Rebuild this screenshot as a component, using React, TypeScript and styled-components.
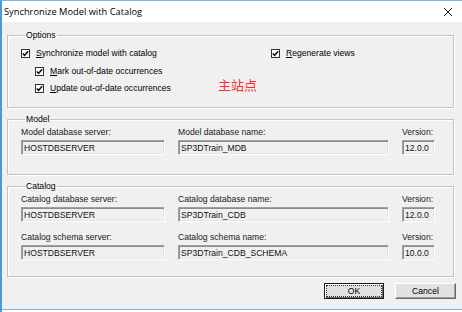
import styled, { createGlobalStyle } from "styled-components";

const GlobalStyle = createGlobalStyle`
  html, body {
    margin: 0;
    padding: 0;
    background: #ffffff;
  }
  body {
    font-family: "Liberation Sans", Arial, sans-serif;
  }
`;

const CloseIcon = () => (
  <svg width="10" height="10" viewBox="0 0 10 10" fill="none">
    <path d="M1 1L9 9M9 1L1 9" stroke="#222" strokeWidth="1" />
  </svg>
);

const CheckMark = () => (
  <svg width="7" height="7" viewBox="0 0 7 7" fill="none">
    <path d="M0.8 3.4L2.6 5.3L6.2 1.2" stroke="#111" strokeWidth="1.5" />
  </svg>
);

type CheckProps = { label: string; indent?: boolean };

const Check = ({ label, indent }: CheckProps) => (
  <CheckRow $indent={indent}>
    <CheckBox>
      <CheckMark />
    </CheckBox>
    <CheckText>
      <u>{label[0]}</u>
      {label.slice(1)}
    </CheckText>
  </CheckRow>
);

type FieldProps = { label: string; value: string };

const Field = ({ label, value }: FieldProps) => (
  <FieldCell>
    <FieldLabel>{label}</FieldLabel>
    <TextBox>{value}</TextBox>
  </FieldCell>
);

const App = () => {
  return (
    <>
      <GlobalStyle />
      <Window>
        <TitleBar>
          <Title>Synchronize Model with Catalog</Title>
          <CloseButton aria-label="Close">
            <CloseIcon />
          </CloseButton>
        </TitleBar>

        <Body>
          <OptionsGroup>
            <Legend>Options</Legend>
            <OptionsGrid>
              <Check label="Synchronize model with catalog" />
              <Check label="Regenerate views" />
              <Check label="Mark out-of-date occurrences" indent />
              <span />
              <Check label="Update out-of-date occurrences" indent />
            </OptionsGrid>
            <Watermark>主站点</Watermark>
          </OptionsGroup>

          <Group $bottom={19}>
            <Legend>Model</Legend>
            <FieldGrid>
              <Field label="Model database server:" value="HOSTDBSERVER" />
              <Field label="Model database name:" value="SP3DTrain_MDB" />
              <Field label="Version:" value="12.0.0" />
            </FieldGrid>
          </Group>

          <Group $bottom={16}>
            <Legend>Catalog</Legend>
            <FieldGrid>
              <Field label="Catalog database server:" value="HOSTDBSERVER" />
              <Field label="Catalog database name:" value="SP3DTrain_CDB" />
              <Field label="Version:" value="12.0.0" />
              <Field label="Catalog schema server:" value="HOSTDBSERVER" />
              <Field label="Catalog schema name:" value="SP3DTrain_CDB_SCHEMA" />
              <Field label="Version:" value="10.0.0" />
            </FieldGrid>
          </Group>

          <ButtonRow>
            <DialogButton $default>
              <FocusRing>OK</FocusRing>
            </DialogButton>
            <DialogButton>Cancel</DialogButton>
          </ButtonRow>
        </Body>
        <Taskbar />
      </Window>
    </>
  );
};

const Window = styled.div`
  width: 462px;
  height: 312px;
  box-sizing: border-box;
  display: flex;
  flex-direction: column;
  border-top: 1px solid #7fb4e6;
  border-left: 2px solid #4a98e0;
  background: #f0f0f0;
  overflow: hidden;
`;

const TitleBar = styled.div`
  height: 21px;
  flex-shrink: 0;
  display: flex;
  align-items: center;
  justify-content: space-between;
  background: #ffffff;
  padding: 0 8px 0 2px;
`;

const Title = styled.span`
  font-family: "Open Sans", "Noto Sans", sans-serif;
  font-size: 9.3px;
  color: #000;
`;

const CloseButton = styled.span`
  display: flex;
  align-items: center;
  justify-content: center;
  width: 12px;
  height: 12px;
`;

const Body = styled.div`
  flex: 1;
  display: flex;
  flex-direction: column;
  padding: 8px 6px 0 5px;
  font-size: 8.6px;
  color: #000;
`;

const Group = styled.fieldset<{ $bottom?: number }>`
  margin: 0 2px 6px 0;
  padding: 3px 13px ${({ $bottom }) => $bottom ?? 14}px;
  border: 1px solid #c3c3c3;
  box-shadow: inset 1px 1px 0 #ffffff, 1px 1px 0 #ffffff;
  min-width: 0;
  position: relative;
`;

const OptionsGroup = styled(Group)`
  padding-top: 8px;
  padding-bottom: 13px;
`;

const Legend = styled.legend`
  padding: 0 1px;
  margin-left: 4px;
  line-height: 10px;
  font-size: 8.6px;
`;

const OptionsGrid = styled.div`
  display: grid;
  grid-template-columns: 250px auto;
  row-gap: 6.5px;
  align-items: center;
`;

const CheckRow = styled.div<{ $indent?: boolean }>`
  display: flex;
  align-items: center;
  gap: 6px;
  height: 11px;
  padding-left: ${({ $indent }) => ($indent ? "14px" : "0")};
`;

const CheckBox = styled.span`
  width: 7px;
  height: 7px;
  flex-shrink: 0;
  display: flex;
  align-items: center;
  justify-content: center;
  border: 1px solid #333;
  background: #fff;
`;

const CheckText = styled.span`
  white-space: nowrap;
  line-height: 11px;
`;

const Watermark = styled.span`
  position: absolute;
  left: 210px;
  top: 35px;
  font-family: "Noto Sans CJK SC", sans-serif;
  font-size: 13px;
  color: #ff2b2b;
`;

const FieldGrid = styled.div`
  display: grid;
  grid-template-columns: 144px 211px 33px;
  column-gap: 13px;
  row-gap: 10px;
`;

const FieldCell = styled.div`
  display: flex;
  flex-direction: column;
  gap: 3px;
`;

const FieldLabel = styled.span`
  line-height: 10px;
  color: #1a1a1a;
  white-space: nowrap;
`;

const TextBox = styled.div`
  height: 15px;
  box-sizing: border-box;
  padding: 0 2px;
  display: flex;
  align-items: center;
  border: 1px solid;
  border-color: #a0a0a0 #ffffff #ffffff #a0a0a0;
  box-shadow: inset 1px 1px 0 #8c8c8c, inset -1px -1px 0 #e3e3e3;
  background: #f0f0f0;
  color: #111;
  white-space: nowrap;
  overflow: hidden;
`;

const ButtonRow = styled.div`
  display: flex;
  justify-content: flex-end;
  gap: 11px;
`;

const DialogButton = styled.div<{ $default?: boolean }>`
  width: ${({ $default }) => ($default ? "60px" : "61px")};
  height: 16px;
  box-sizing: border-box;
  display: flex;
  align-items: center;
  justify-content: center;
  padding: 1px;
  background: #e1e1e1;
  border: 1px solid;
  border-color: ${({ $default }) =>
    $default ? "#1a1a1a" : "#ffffff #696969 #696969 #ffffff"};
  box-shadow: ${({ $default }) =>
    $default ? "inset 1px 1px 0 #fff, inset -1px -1px 0 #696969" : "inset -1px -1px 0 #a0a0a0"};
  color: #000;
`;

const FocusRing = styled.span`
  flex: 1;
  align-self: stretch;
  display: flex;
  align-items: center;
  justify-content: center;
  margin: 1px;
  outline: 1px dotted #333;
`;

const Taskbar = styled.div`
  height: 2px;
  flex-shrink: 0;
  border-top: 1px solid #7fb4e6;
  background: #ffffff;
`;

export default App;
